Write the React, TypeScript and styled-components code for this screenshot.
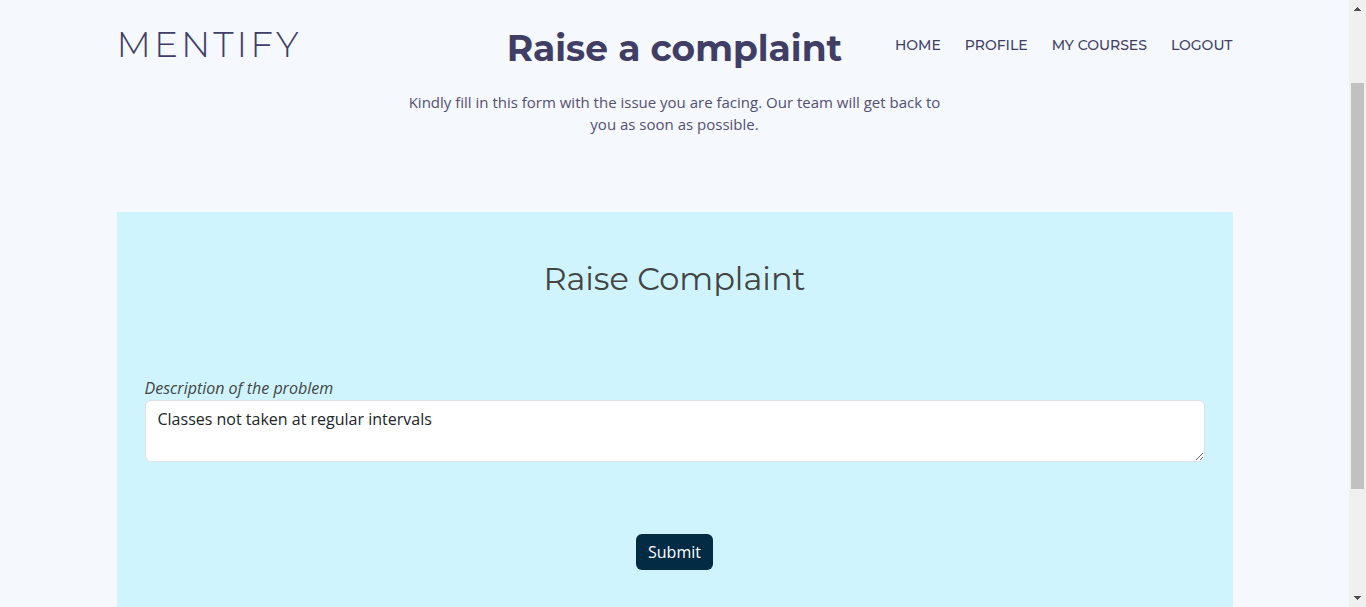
import React from "react";
import styled, { createGlobalStyle } from "styled-components";

const heading = `"Montserrat", Inter, "Open Sans", sans-serif`;
const body = `"Open Sans", "Noto Sans", sans-serif`;

const GlobalStyle = createGlobalStyle`
  *, *::before, *::after { box-sizing: border-box; }
  body {
    margin: 0;
    background: #f5f8fd;
    color: #444444;
    font: 400 16px/24px ${body};
  }
`;

const Shell = styled.div`
  display: flex;
  height: 100vh;
  overflow: hidden;
`;

const Page = styled.div`
  flex: 1;
  min-width: 0;
  display: flex;
  flex-direction: column;
`;

const Container = styled.div<{ $grow?: boolean }>`
  width: 100%;
  max-width: 1140px;
  margin: 0 auto;
  padding: 0 12px;
  ${(p) => p.$grow && "flex: 1; display: flex; flex-direction: column;"}
`;

const Header = styled.header`
  display: grid;
  grid-template-columns: 1fr auto 1fr;
  align-items: start;
  padding-top: 24px;
  color: #413e66;
  font-family: ${heading};
`;

const Logo = styled.a`
  color: inherit;
  text-decoration: none;
  font-size: 36px;
  line-height: 40px;
  font-weight: 300;
  letter-spacing: 3px;
`;

const Title = styled.h1`
  margin: 0;
  font-size: 36px;
  line-height: 48px;
  font-weight: 700;
`;

const Nav = styled.nav`
  display: flex;
  justify-content: flex-end;
  gap: 24px;
`;

const NavLink = styled.a`
  color: inherit;
  text-decoration: none;
  text-transform: uppercase;
  white-space: nowrap;
  font-size: 14px;
  line-height: 42px;
  font-weight: 500;
`;

const Intro = styled.p`
  max-width: 534px;
  margin: 19px auto 77px;
  color: #535074;
  font-size: 15px;
  line-height: 22px;
  text-align: center;
`;

const Form = styled.form`
  flex: 1;
  display: flex;
  flex-direction: column;
  padding: 47px 28px 0;
  background: #cff4fe;
`;

const FormTitle = styled.h2`
  margin: 0 0 77px;
  font-family: ${heading};
  font-size: 32px;
  line-height: 40px;
  font-weight: 400;
  text-align: center;
`;

const Label = styled.label`
  font-style: italic;
`;

const TextArea = styled.textarea`
  display: block;
  width: 100%;
  height: 62px;
  padding: 6px 12px;
  border: 1px solid #dee2e6;
  border-radius: 6px;
  background: #ffffff;
  color: #212529;
  font: 400 16px/24px ${body};
  resize: vertical;
`;

const Submit = styled.button`
  align-self: center;
  margin-top: 72px;
  padding: 6px 12px;
  border: 0;
  border-radius: 6px;
  background: #032b44;
  color: #ffffff;
  font: 400 16px/24px ${body};
`;

const ScrollTrack = styled.div`
  flex: none;
  width: 17px;
  display: flex;
  flex-direction: column;
  align-items: center;
  background: #f0f0f0;
`;

const Arrow = styled.svg`
  display: block;
  flex: none;
  width: 17px;
  height: 17px;
  fill: #505050;
`;

const Gap = styled.div<{ $share: number }>`
  flex: ${(p) => p.$share} 1 0;
`;

const Thumb = styled.div`
  flex: 406 1 0;
  width: 13px;
  background: #c1c1c1;
`;

const links = ["Home", "Profile", "My Courses", "Logout"];

export default function App() {
  return (
    <>
      <GlobalStyle />
      <Shell>
        <Page>
          <Container>
            <Header>
              <Logo href="#">MENTIFY</Logo>
              <Title>Raise a complaint</Title>
              <Nav>
                {links.map((name) => (
                  <NavLink href="#" key={name}>
                    {name}
                  </NavLink>
                ))}
              </Nav>
            </Header>
            <Intro>
              Kindly fill in this form with the issue you are facing. Our team will get back to you
              as soon as possible.
            </Intro>
          </Container>
          <Container as="main" $grow>
            <Form onSubmit={(e) => e.preventDefault()}>
              <FormTitle>Raise Complaint</FormTitle>
              <Label htmlFor="description">Description of the problem</Label>
              <TextArea id="description" rows={2} defaultValue="Classes not taken at regular intervals" />
              <Submit type="submit">Submit</Submit>
            </Form>
          </Container>
        </Page>
        <ScrollTrack aria-hidden="true">
          <Arrow viewBox="0 0 17 17" shapeRendering="crispEdges">
            <path d="M8 7h1v1h1v1h1v1h1v1H5v-1h1V9h1V8h1z" />
          </Arrow>
          <Gap $share={66} />
          <Thumb />
          <Gap $share={101} />
          <Arrow viewBox="0 0 17 17" shapeRendering="crispEdges">
            <path d="M5 6h7v1h-1v1h-1v1H9v1H8V9H7V8H6V7H5z" />
          </Arrow>
        </ScrollTrack>
      </Shell>
    </>
  );
}
